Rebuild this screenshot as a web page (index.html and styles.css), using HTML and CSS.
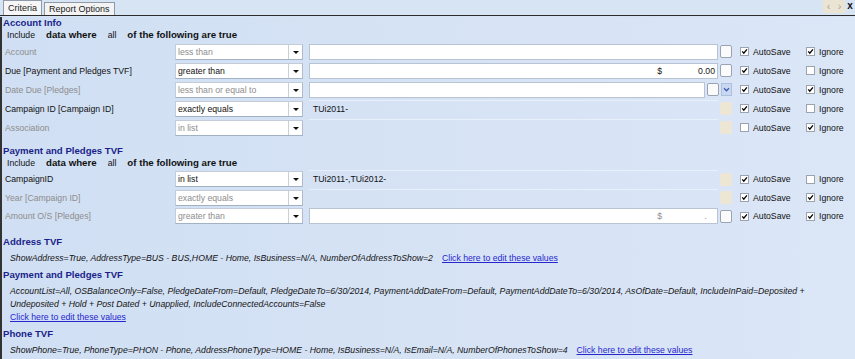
FILE: index.html
```html
<!DOCTYPE html>
<html>
<head>
<meta charset="utf-8">
<title>Criteria</title>
<link rel="stylesheet" href="styles.css">
</head>
<body>
<div class="tabbar">
  <div class="tab active">Criteria</div>
  <div class="tab">Report Options</div>
  <div class="nav"><span class="navbtn">&lsaquo;</span><span class="navbtn">&rsaquo;</span><span class="close">x</span></div>
</div>
<div class="panel">
  <div class="sec-title">Account Info</div>
  <div class="include"><span>Include</span><b>data where</b><span>all</span><b>of the following are true</b></div>

  <div class="rows">
    <div class="row">
      <div class="label dis">Account</div>
      <div class="combo dis"><span class="ctext">less than</span><span class="arrow"></span></div>
      <div class="valwrap"><div class="field"></div><span class="sq white"></span></div>
      <div class="cb auto"><span class="cbx"><svg viewBox="0 0 9 9"><path d="M1.6 4.4 L3.6 6.6 L7.6 1.8"/></svg></span>AutoSave</div>
      <div class="cb"><span class="cbx"><svg viewBox="0 0 9 9"><path d="M1.6 4.4 L3.6 6.6 L7.6 1.8"/></svg></span>Ignore</div>
    </div>
    <div class="row">
      <div class="label">Due [Payment and Pledges TVF]</div>
      <div class="combo"><span class="ctext">greater than</span><span class="arrow"></span></div>
      <div class="valwrap"><div class="field money"><span class="cur">$</span><span class="amt">0.00</span></div><span class="sq white"></span></div>
      <div class="cb auto"><span class="cbx"><svg viewBox="0 0 9 9"><path d="M1.6 4.4 L3.6 6.6 L7.6 1.8"/></svg></span>AutoSave</div>
      <div class="cb"><span class="cbx"></span>Ignore</div>
    </div>
    <div class="row">
      <div class="label dis">Date Due [Pledges]</div>
      <div class="combo dis"><span class="ctext">less than or equal to</span><span class="arrow"></span></div>
      <div class="valwrap"><div class="field"></div><span class="sq white"></span><span class="drop"><svg viewBox="0 0 11 13"><path d="M2.5 5 L5.5 8 L8.5 5"/></svg></span></div>
      <div class="cb auto"><span class="cbx"><svg viewBox="0 0 9 9"><path d="M1.6 4.4 L3.6 6.6 L7.6 1.8"/></svg></span>AutoSave</div>
      <div class="cb"><span class="cbx"><svg viewBox="0 0 9 9"><path d="M1.6 4.4 L3.6 6.6 L7.6 1.8"/></svg></span>Ignore</div>
    </div>
    <div class="row">
      <div class="label">Campaign ID [Campaign ID]</div>
      <div class="combo"><span class="ctext">exactly equals</span><span class="arrow"></span></div>
      <div class="valwrap"><div class="field flat">TUi2011-</div><span class="sq beige"></span></div>
      <div class="cb auto"><span class="cbx"><svg viewBox="0 0 9 9"><path d="M1.6 4.4 L3.6 6.6 L7.6 1.8"/></svg></span>AutoSave</div>
      <div class="cb"><span class="cbx"></span>Ignore</div>
    </div>
    <div class="row">
      <div class="label dis">Association</div>
      <div class="combo dis"><span class="ctext">in list</span><span class="arrow"></span></div>
      <div class="valwrap"><div class="field flat"></div><span class="sq beige"></span></div>
      <div class="cb auto"><span class="cbx"></span>AutoSave</div>
      <div class="cb"><span class="cbx"><svg viewBox="0 0 9 9"><path d="M1.6 4.4 L3.6 6.6 L7.6 1.8"/></svg></span>Ignore</div>
    </div>
  </div>

  <div class="sec-title second">Payment and Pledges TVF</div>
  <div class="include"><span>Include</span><b>data where</b><span>all</span><b>of the following are true</b></div>

  <div class="rows tight">
    <div class="row">
      <div class="label">CampaignID</div>
      <div class="combo"><span class="ctext">in list</span><span class="arrow"></span></div>
      <div class="valwrap"><div class="field flat">TUi2011-,TUi2012-</div><span class="sq beige"></span></div>
      <div class="cb auto"><span class="cbx"><svg viewBox="0 0 9 9"><path d="M1.6 4.4 L3.6 6.6 L7.6 1.8"/></svg></span>AutoSave</div>
      <div class="cb"><span class="cbx"></span>Ignore</div>
    </div>
    <div class="row">
      <div class="label dis">Year [Campaign ID]</div>
      <div class="combo dis"><span class="ctext">exactly equals</span><span class="arrow"></span></div>
      <div class="valwrap"><div class="field flat"></div><span class="sq beige"></span></div>
      <div class="cb auto"><span class="cbx"><svg viewBox="0 0 9 9"><path d="M1.6 4.4 L3.6 6.6 L7.6 1.8"/></svg></span>AutoSave</div>
      <div class="cb"><span class="cbx"><svg viewBox="0 0 9 9"><path d="M1.6 4.4 L3.6 6.6 L7.6 1.8"/></svg></span>Ignore</div>
    </div>
    <div class="row">
      <div class="label dis">Amount O/S [Pledges]</div>
      <div class="combo dis"><span class="ctext">greater than</span><span class="arrow"></span></div>
      <div class="valwrap"><div class="field money dis"><span class="cur">$</span><span class="amt blank">.</span></div><span class="sq white"></span></div>
      <div class="cb auto"><span class="cbx"><svg viewBox="0 0 9 9"><path d="M1.6 4.4 L3.6 6.6 L7.6 1.8"/></svg></span>AutoSave</div>
      <div class="cb"><span class="cbx"><svg viewBox="0 0 9 9"><path d="M1.6 4.4 L3.6 6.6 L7.6 1.8"/></svg></span>Ignore</div>
    </div>
  </div>

  <div class="tvf">
    <div class="tvf-title">Address TVF</div>
    <div class="tvf-body"><i>ShowAddress=True, AddressType=BUS - BUS,HOME - Home, IsBusiness=N/A, NumberOfAddressToShow=2</i><a class="edit" href="#">Click here to edit these values</a></div>
    <div class="tvf-title">Payment and Pledges TVF</div>
    <div class="tvf-body"><i>AccountList=All, OSBalanceOnly=False, PledgeDateFrom=Default, PledgeDateTo=6/30/2014, PaymentAddDateFrom=Default, PaymentAddDateTo=6/30/2014, AsOfDate=Default, IncludeInPaid=Deposited + Undeposited + Hold + Post Dated + Unapplied, IncludeConnectedAccounts=False</i><br><a class="edit first" href="#">Click here to edit these values</a></div>
    <div class="tvf-title">Phone TVF</div>
    <div class="tvf-body"><i>ShowPhone=True, PhoneType=PHON - Phone, AddressPhoneType=HOME - Home, IsBusiness=N/A, IsEmail=N/A, NumberOfPhonesToShow=4</i><a class="edit" href="#">Click here to edit these values</a></div>
  </div>
</div>
</body>
</html>
```
FILE: styles.css
```css
* { box-sizing: border-box; }

body {
  margin: 0;
  width: 855px;
  height: 359px;
  overflow: hidden;
  font-family: "Liberation Sans", Arial, sans-serif;
  font-size: 8.7px;
  color: #141414;
  background: #d5e3f5;
}

/* tab strip */
.tabbar {
  height: 16px;
  border-bottom: 1px solid #2c2c2c;
  background: #d6e4f4;
  display: flex;
  align-items: flex-end;
  padding-left: 3px;
}
.tab {
  height: 13px;
  line-height: 12px;
  padding: 0 4px;
  border: 1px solid #8f99a8;
  border-bottom: none;
  background: #f3f3f3;
  margin-right: 2px;
  color: #222;
  font-size: 9px;
}
.tab.active {
  height: 15px;
  line-height: 14px;
  padding: 0 4px;
  background: #f6f6f6;
}
.nav {
  margin-left: auto;
  align-self: flex-start;
  display: flex;
  height: 13px;
  line-height: 12px;
}
.navbtn {
  width: 11px;
  text-align: center;
  background: #ebe4d2;
  color: #a8a8a8;
  font-size: 11px;
}
.close {
  width: 10px;
  text-align: center;
  font-weight: bold;
  font-size: 10px;
  color: #111;
}

/* main panel */
.panel {
  height: 343px;
  border-left: 2px solid #333;
  background: linear-gradient(90deg, #d0dff3 0%, #d6e3f5 50%, #dbe6f7 100%);
}

.sec-title {
  padding-left: 1px;
  height: 12px;
  line-height: 12px;
  margin-top: 1px;
  font-size: 9.6px;
  font-weight: bold;
  color: #1b1f8a;
}
.sec-title.second { margin-top: 8px; }

.include {
  display: flex;
  gap: 11px;
  padding-left: 5px;
  height: 12px;
  line-height: 12px;
  font-size: 8.7px;
}
.include b { font-size: 9.7px; color: #111; }

.rows { margin-top: 1px; }

.row {
  display: flex;
  align-items: center;
  height: 19px;
  padding-left: 3px;
}
.rows.tight .row { height: 18.5px; }

.label {
  width: 170px;
  white-space: nowrap;
  color: #111;
}
.label.dis { color: #8d8d8d; }

.combo {
  width: 128px;
  height: 16px;
  display: flex;
  background: #fff;
  border: 1px solid #aebbcc;
  border-color: #c3ccd8 #b0bccc #a3b1c4 #c3ccd8;
}
.ctext {
  flex: 1;
  padding-left: 2px;
  line-height: 14px;
  white-space: nowrap;
  overflow: hidden;
  color: #111;
}
.combo.dis .ctext { color: #8d8d8d; }
.arrow {
  width: 14px;
  border-left: 1px solid #c9d0da;
  position: relative;
}
.arrow::after {
  content: "";
  position: absolute;
  left: 4px;
  top: 6px;
  border-left: 3px solid transparent;
  border-right: 3px solid transparent;
  border-top: 3px solid #111;
}

.valwrap {
  width: 423px;
  margin-left: 6px;
  display: flex;
  align-items: center;
  gap: 2px;
}
.field {
  flex: 1;
  height: 16px;
  background: #fff;
  border: 1px solid #b8c4d4;
  line-height: 14px;
  padding-left: 3px;
}
.field.flat {
  height: 18px;
  background: transparent;
  border: none;
  border-top: 1px solid rgba(235, 242, 252, 0.8);
  line-height: 17px;
  padding-left: 4px;
  color: #111;
}
.field.money {
  display: flex;
  justify-content: flex-end;
  padding-right: 2px;
}
.field.money.dis { color: #8d8d8d; }
.amt {
  width: 53px;
  text-align: right;
}
.amt.blank { padding-right: 8px; }

.sq {
  width: 12px;
  height: 13px;
  border-radius: 2px;
  flex: none;
}
.sq.white {
  background: #fbfbfb;
  border: 1px solid #98a4b4;
}
.sq.beige {
  background: #eee6d5;
}
.drop {
  width: 11px;
  height: 13px;
  flex: none;
  background: #c9d8f0;
  border: 1px solid #adc0e0;
}
.drop svg {
  display: block;
  width: 9px;
  height: 11px;
}
.drop path {
  fill: none;
  stroke: #3d5cb4;
  stroke-width: 1.6;
}

.cb {
  display: flex;
  align-items: center;
  gap: 4px;
  color: #111;
}
.cb.auto { margin-left: 8px; width: 66px; }
.cbx {
  width: 9px;
  height: 9px;
  background: #fff;
  border: 1px solid #9aa3ae;
  flex: none;
}
.cbx svg {
  display: block;
  width: 7px;
  height: 7px;
}
.cbx path {
  fill: none;
  stroke: #000;
  stroke-width: 1.7;
}

/* TVF summaries */
.tvf { margin-top: 10px; }
.tvf-title {
  padding-left: 1px;
  height: 12px;
  line-height: 12px;
  font-size: 9.6px;
  font-weight: bold;
  color: #1b1f8a;
}
.tvf-body {
  padding: 4px 6px 4px 8px;
  line-height: 13px;
  font-size: 8.7px;
  color: #141414;
}
.tvf-body i { font-style: italic; }
.edit {
  color: #2626cf;
  text-decoration: underline;
  margin-left: 9px;
}
.edit.first { margin-left: 0; }
```
